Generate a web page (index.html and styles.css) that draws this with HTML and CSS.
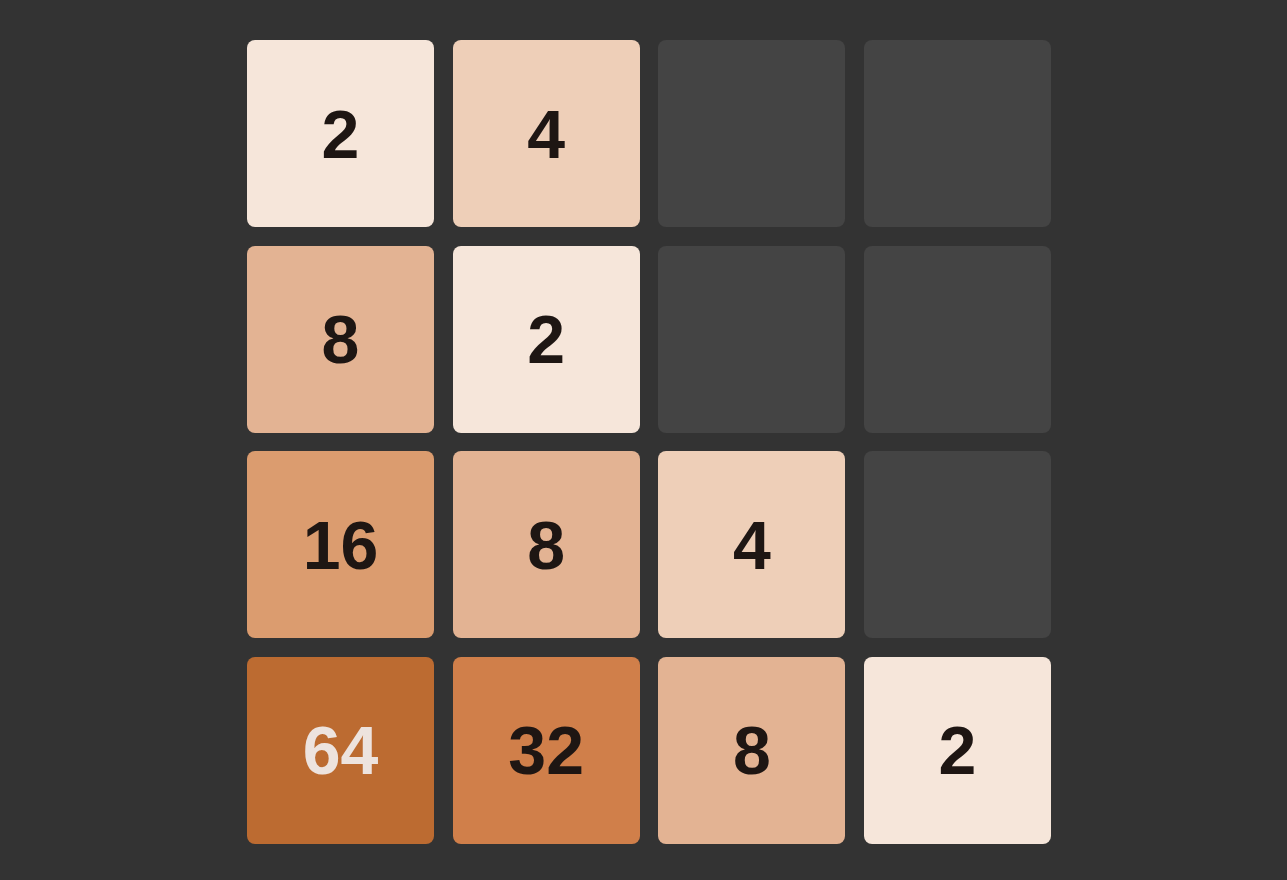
FILE: index.html
```html
<!DOCTYPE html>
<html lang="en">
<head>
  <meta charset="UTF-8">
  <meta name="viewport" content="width=device-width, initial-scale=1.0">
  <title>2048</title>
  <link rel="stylesheet" href="styles.css">
</head>
<body>
  <div id="board">
    <div class="tile t2">2</div>
    <div class="tile t4">4</div>
    <div class="tile"></div>
    <div class="tile"></div>

    <div class="tile t8">8</div>
    <div class="tile t2">2</div>
    <div class="tile"></div>
    <div class="tile"></div>

    <div class="tile t16">16</div>
    <div class="tile t8">8</div>
    <div class="tile t4">4</div>
    <div class="tile"></div>

    <div class="tile t64">64</div>
    <div class="tile t32">32</div>
    <div class="tile t8">8</div>
    <div class="tile t2">2</div>
  </div>
</body>
</html>
```

FILE: styles.css
```css
body {
  font-family: "Liberation Sans", Arial, sans-serif;
  margin: 0;
  height: 100vh;
  background: #333333;
  overflow: hidden;
}
#board {
  display: grid;
  grid-template-columns: repeat(4, 187px);
  grid-auto-rows: 187px;
  gap: 18.67px;
  padding: 40px 0 0 247px;
}
.tile {
  display: flex;
  justify-content: center;
  align-items: center;
  background: #444444;
  border-radius: 8px;
  font-size: 68px;
  font-weight: bold;
  color: #1e1613;
}
.t2 { background: #f6e6da; }
.t4 { background: #eecfb8; }
.t8 { background: #e3b393; }
.t16 { background: #db9c6f; }
.t32 { background: #d07f4a; }
.t64 {
  background: #bc6b31;
  color: #ede3de;
}
```
